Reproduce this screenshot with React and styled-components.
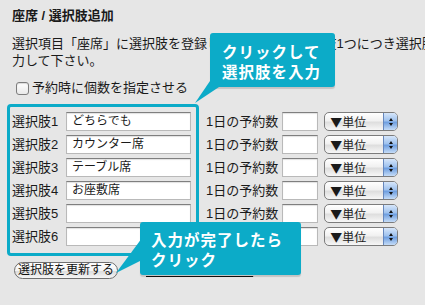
import styled, { createGlobalStyle } from 'styled-components';

const GlobalStyle = createGlobalStyle`
  html, body {
    margin: 0;
    padding: 0;
    width: 425px;
    height: 305px;
    overflow: hidden;
    background: #e6e6e6;
  }
  body {
    font-family: "Liberation Sans", "Noto Sans CJK JP", sans-serif;
    color: #1a1a1a;
  }
`;

const CYAN = '#0cabc8';

const Page = styled.div`
  position: relative;
  width: 425px;
  height: 305px;
  box-sizing: border-box;
  padding: 8px 0 0 12px;
  overflow: hidden;
`;

const Title = styled.h2`
  margin: 0;
  font-size: 13px;
  line-height: 16px;
  font-weight: 700;
`;

const Lead = styled.p`
  margin: 11px 0 0;
  width: 413px;
  overflow: hidden;
  font-size: 13px;
  line-height: 17px;
  white-space: nowrap;
`;

const CheckRow = styled.label`
  display: flex;
  align-items: center;
  gap: 3px;
  margin: 11px 0 0 4px;
  height: 16px;
  font-size: 13px;
  line-height: 16px;
`;

const Check = styled.span`
  width: 11px;
  height: 11px;
  border: 1px solid #7d7d7d;
  border-radius: 3px;
  background: linear-gradient(#ffffff, #e9e9e9);
  box-shadow: inset 0 1px 1px rgba(0, 0, 0, 0.15);
`;

const Choices = styled.div`
  display: flex;
  gap: 7px;
  margin: 8px 0 0 -5px;
`;

const Frame = styled.div`
  width: 184px;
  border: 3px solid ${CYAN};
  border-radius: 4px;
  padding: 3px 0 5px 2px;
  box-sizing: content-box;
`;

const Side = styled.div`
  padding-top: 6px;
`;

const Row = styled.div`
  display: flex;
  align-items: center;
  height: 23px;
`;

const Label = styled.span`
  width: 54px;
  font-size: 13px;
  line-height: 16px;
  white-space: nowrap;
`;

const Field = styled.div`
  width: ${(p) => p.$w}px;
  height: 19px;
  box-sizing: border-box;
  margin-left: ${(p) => p.$ml || 0}px;
  background: #fff;
  border: 1px solid #b9b9b9;
  border-top-color: #7f7f7f;
  box-shadow: inset 0 1px 1px rgba(0, 0, 0, 0.12);
  padding: 0 5px;
  font-size: 12px;
  line-height: 17px;
  white-space: nowrap;
  overflow: hidden;
`;

const DayLabel = styled.span`
  font-size: 13px;
  line-height: 16px;
  white-space: nowrap;
`;

const PopUp = styled.div`
  display: flex;
  width: 74px;
  height: 19px;
  box-sizing: border-box;
  margin-left: ${(p) => p.$ml || 0}px;
  border: 1px solid #7c7c7c;
  border-radius: 5px;
  overflow: hidden;
  background: linear-gradient(#ffffff 0%, #f1f1f1 45%, #dedede 55%, #f7f7f7 100%);
`;

const PopUpText = styled.span`
  flex: 1;
  padding-left: 5px;
  font-family: "Noto Sans CJK JP", sans-serif;
  font-size: 12px;
  line-height: 17px;
  white-space: nowrap;
`;

const Stepper = styled.span`
  width: 13px;
  display: flex;
  flex-direction: column;
  align-items: center;
  justify-content: center;
  gap: 2px;
  border-left: 1px solid #6687bd;
  background: linear-gradient(#d6e6fa 0%, #9fc2ee 45%, #6f9fe0 55%, #c5dcf7 100%);
`;

const Arrow = styled.span`
  width: 0;
  height: 0;
  border-left: 2.5px solid transparent;
  border-right: 2.5px solid transparent;
  ${(p) => (p.$up ? 'border-bottom: 3px solid #111;' : 'border-top: 3px solid #111;')}
`;

const Footer = styled.div`
  display: flex;
  align-items: flex-end;
  gap: 28px;
  margin: 5px 0 0 2px;
`;

const PillButton = styled.button`
  width: 104px;
  height: 17px;
  padding: 0;
  border: 1px solid #6f6f6f;
  border-radius: 9px;
  background: linear-gradient(#ffffff 0%, #f3f3f3 50%, #dcdcdc 55%, #f6f6f6 100%);
  font-family: inherit;
  font-size: 12px;
  line-height: 15px;
  color: #111;
`;

const SortLink = styled.a`
  font-size: 12px;
  line-height: 13px;
  color: #111;
  text-decoration: underline;
  text-underline-offset: 5px;
  margin-bottom: 5px;
`;

const Callout = styled.div`
  position: absolute;
  left: ${(p) => p.$x}px;
  top: ${(p) => p.$y}px;
  width: ${(p) => p.$w}px;
  height: ${(p) => p.$h}px;
  box-sizing: border-box;
  padding: ${(p) => p.$pt}px 0 0 ${(p) => p.$pl}px;
  background: ${CYAN};
  border-radius: 3px;
  box-shadow: 0 2px 1px rgba(0, 0, 0, 0.15);
  color: #fff;
  font-family: "Noto Sans CJK JP", sans-serif;
  font-weight: 700;
  font-size: 15.5px;
  line-height: 20px;
  letter-spacing: 1px;
  white-space: nowrap;
`;

const Tail = styled.svg`
  position: absolute;
  left: ${(p) => p.$x}px;
  top: 0;
  overflow: visible;
`;

const choices = ['どちらでも', 'カウンター席', 'テーブル席', 'お座敷席', '', ''];

const App = () => {
  return (
    <>
      <GlobalStyle />
      <Page>
        <Title>座席 / 選択肢追加</Title>
        <Lead>
          選択項目「座席」に選択肢を登録して下さい。各選択肢1つにつき選択肢名を入
          <br />
          力して下さい。
        </Lead>
        <CheckRow>
          <Check />
          予約時に個数を指定させる
        </CheckRow>

        <Choices>
          <Frame>
            {choices.map((name, i) => (
              <Row key={i}>
                <Label>選択肢{i + 1}</Label>
                <Field $w={125}>{name}</Field>
              </Row>
            ))}
          </Frame>
          <Side>
            {choices.map((_, i) => (
              <Row key={i}>
                <DayLabel>1日の予約数</DayLabel>
                <Field $w={36} $ml={4} />
                <PopUp $ml={6}>
                  <PopUpText>▼単位</PopUpText>
                  <Stepper>
                    <Arrow $up />
                    <Arrow />
                  </Stepper>
                </PopUp>
              </Row>
            ))}
          </Side>
        </Choices>

        <Footer>
          <PillButton>選択肢を更新する</PillButton>
          <SortLink>選択肢の並び替えへ</SortLink>
        </Footer>

        <Callout $x={210} $y={33} $w={125} $h={54} $pt={8} $pl={12}>
          <Tail $x={-16} width="34" height="72">
            <polygon points="16,48 34,48 1,70" fill={CYAN} />
          </Tail>
          クリックして
          <br />
          選択肢を入力
        </Callout>

        <Callout $x={140} $y={222} $w={161} $h={53} $pt={7} $pl={11}>
          <Tail $x={-26} width="30" height="52">
            <polygon points="28,16 28,38 2,51" fill={CYAN} />
          </Tail>
          入力が完了したら
          <br />
          クリック
        </Callout>
      </Page>
    </>
  );
};

export default App;
